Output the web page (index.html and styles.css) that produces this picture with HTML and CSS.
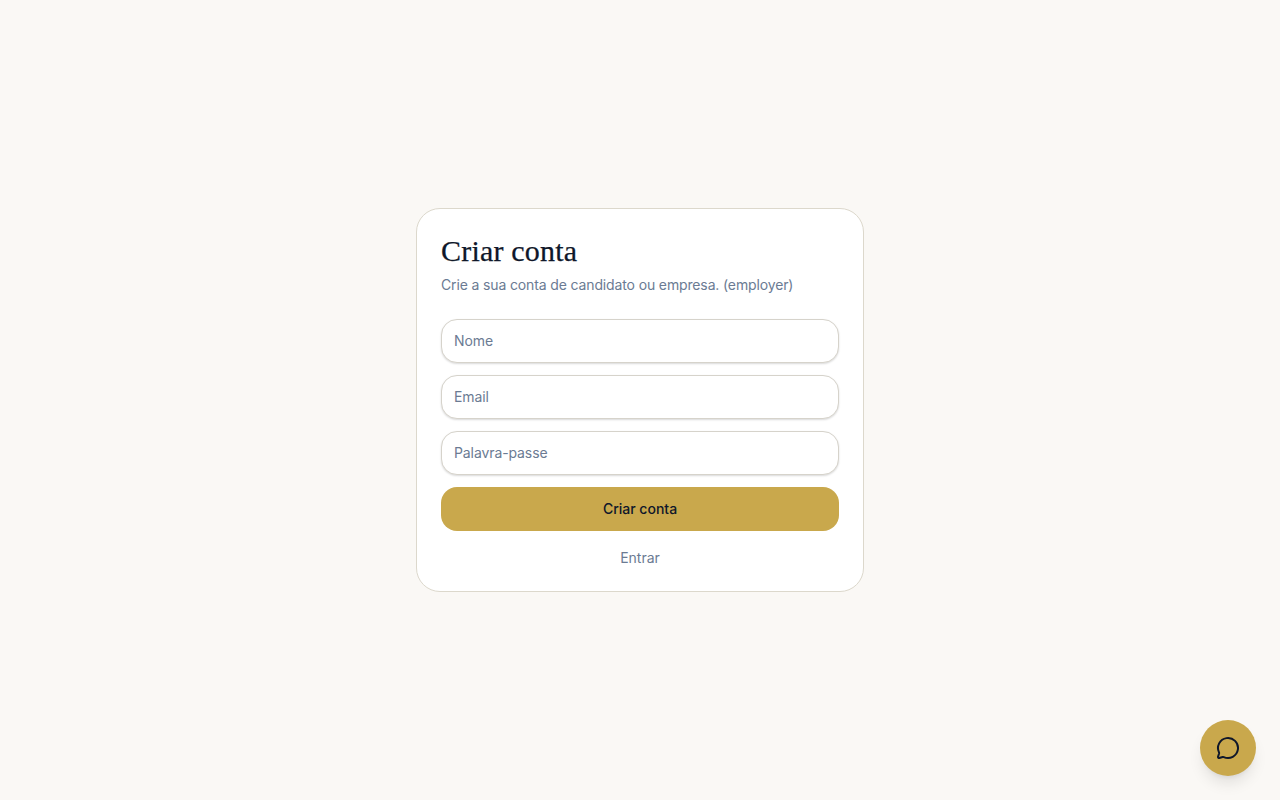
FILE: index.html
```html
<!DOCTYPE html>
<html lang="pt">
<head>
<meta charset="utf-8">
<title>Criar conta</title>
<link rel="stylesheet" href="styles.css">
</head>
<body>
<main class="page">
  <form class="card">
    <h1 class="title">Criar conta</h1>
    <p class="subtitle">Crie a sua conta de candidato ou empresa. (employer)</p>
    <div class="fields">
      <input class="input" type="text" placeholder="Nome">
      <input class="input" type="email" placeholder="Email">
      <input class="input" type="password" placeholder="Palavra-passe">
      <button class="submit" type="button">Criar conta</button>
    </div>
    <a class="link" href="#">Entrar</a>
  </form>
</main>
<button class="chat" type="button" aria-label="Chat">
  <svg class="chat-icon" viewBox="0 0 24 24" fill="none" stroke="currentColor" stroke-width="2" stroke-linecap="round" stroke-linejoin="round">
    <path d="M2.992 16.342a2 2 0 0 1 .094 1.167l-1.065 3.29a1 1 0 0 0 1.236 1.168l3.413-.998a2 2 0 0 1 1.099.092 10 10 0 1 0-4.777-4.719"/>
  </svg>
</button>
</body>
</html>
```
FILE: styles.css
```css
* { box-sizing: border-box; }
html, body { margin: 0; height: 100%; }
body {
  background: #faf8f5;
  color: #0f172a;
  font-family: Inter, "Noto Sans", sans-serif;
}
.page {
  min-height: 800px;
  display: flex;
  align-items: center;
  justify-content: center;
}
.card {
  width: 448px;
  padding: 24px;
  background: #fff;
  border: 1px solid #dcd8cc;
  border-radius: 24px;
  display: flex;
  flex-direction: column;
}
.title {
  margin: 0;
  font-family: "Liberation Serif", serif;
  font-size: 30px;
  line-height: 36px;
  font-weight: 400;
  letter-spacing: 0.2px;
  -webkit-text-stroke: 0.25px #0f172a;
  color: #0f172a;
}
.subtitle {
  margin: 6px 0 24px;
  font-size: 14px;
  line-height: 20px;
  letter-spacing: -0.135px;
  color: #6b7b93;
}
.fields {
  display: flex;
  flex-direction: column;
  gap: 12px;
}
.input {
  height: 44px;
  padding: 0 12px 1px;
  background: #fff;
  border: 1px solid #d6d3cb;
  border-radius: 16px;
  box-shadow: 0 1px 2px rgba(0, 0, 0, 0.15);
  font-family: inherit;
  font-size: 14px;
  letter-spacing: -0.1px;
  color: #0f172a;
  outline: none;
}
.input::placeholder { color: #6b7b93; opacity: 1; }
.submit {
  height: 44px;
  padding: 0 0 1px;
  border: 0;
  border-radius: 16px;
  background: #c9a84c;
  color: #0f172a;
  font-family: inherit;
  font-size: 14px;
  font-weight: 500;
}
.link {
  margin-top: 16px;
  padding-top: 1px;
  margin-bottom: -1px;
  font-size: 14px;
  line-height: 20px;
  text-align: center;
  color: #6b7b93;
  text-decoration: none;
}
.chat {
  position: fixed;
  right: 24px;
  bottom: 24px;
  width: 56px;
  height: 56px;
  padding: 0;
  border: 0;
  border-radius: 50%;
  background: #c9a84c;
  color: #0f172a;
  display: flex;
  align-items: center;
  justify-content: center;
  box-shadow: 0 10px 15px -3px rgba(0, 0, 0, 0.1), 0 4px 6px -4px rgba(0, 0, 0, 0.1);
}
.chat-icon { width: 24px; height: 24px; }
```
